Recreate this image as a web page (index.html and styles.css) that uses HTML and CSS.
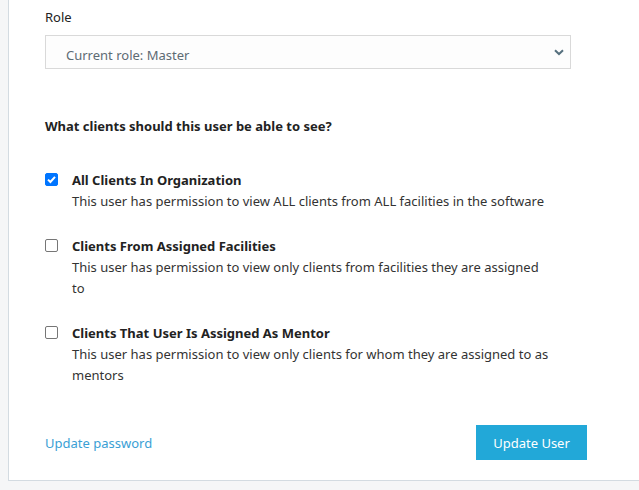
FILE: index.html
```html
<!DOCTYPE html>
<html>
<head>
<meta charset="utf-8">
<link rel="stylesheet" href="styles.css">
</head>
<body>
<div class="card">
  <div class="field">
    <label class="label">Role</label>
    <div class="select">
      <span class="value">Current role: Master</span>
      <svg class="chev" width="10" height="7" viewBox="0 0 10 7"><path d="M1 1.2 L5 5 L9 1.2" fill="none" stroke="#56707e" stroke-width="2"/></svg>
    </div>
  </div>
  <h3 class="question">What clients should this user be able to see?</h3>
  <div class="options">
    <div class="option">
      <span class="box checked"><svg width="13" height="13" viewBox="0 0 13 13"><path d="M3 6.6 L5.4 9 L10 3.8" fill="none" stroke="#fff" stroke-width="2"/></svg></span>
      <div class="text">
        <div class="title">All Clients In Organization</div>
        <div class="desc">This user has permission to view ALL clients from ALL facilities in the software</div>
      </div>
    </div>
    <div class="option">
      <span class="box"></span>
      <div class="text">
        <div class="title">Clients From Assigned Facilities</div>
        <div class="desc">This user has permission to view only clients from facilities they are assigned to</div>
      </div>
    </div>
    <div class="option">
      <span class="box"></span>
      <div class="text">
        <div class="title">Clients That User Is Assigned As Mentor</div>
        <div class="desc">This user has permission to view only clients for whom they are assigned to as mentors</div>
      </div>
    </div>
  </div>
  <div class="footer">
    <a class="link" href="#">Update password</a>
    <button class="btn">Update User</button>
  </div>
</div>
</body>
</html>
```
FILE: styles.css
```css
* { box-sizing: border-box; }
html, body { margin: 0; padding: 0; }
body {
  background: #f5f6f7;
  font-family: "Noto Sans", "Open Sans", sans-serif;
  font-size: 13px;
  color: #333;
  width: 639px;
  height: 490px;
  overflow: hidden;
}
.card {
  margin-left: 8px;
  width: 660px;
  height: 481px;
  background: #fff;
  border-left: 1px solid #d3dbe1;
  border-bottom: 1px solid #d3dbe1;
  padding: 6px 0 0 36px;
}
.label {
  display: block;
  color: #222;
  line-height: 22px;
  height: 29px;
}
.select {
  width: 526px;
  height: 34px;
  border: 1px solid #d9d9d9;
  background: #fdfdfd;
  display: flex;
  align-items: center;
  justify-content: space-between;
  padding: 0 6px 0 20px;
  color: #5d6b74;
}
.value { padding-top: 6px; }
.chev { margin-top: 1px; }
.question {
  margin: 48px 0 0;
  font-size: 13px;
  font-weight: bold;
  color: #222;
  line-height: 18px;
}
.options {
  margin-top: 35px;
  display: flex;
  flex-direction: column;
  gap: 24px;
}
.option { display: flex; }
.box {
  width: 13px;
  height: 13px;
  border: 1px solid #767676;
  border-radius: 2px;
  margin: 3px 14px 0 0;
  flex: none;
  display: flex;
}
.box.checked { background: #0075ff; border-color: #0075ff; }
.box.checked svg { margin: -1px; }
.text { width: 482px; }
.title { font-weight: bold; color: #222; line-height: 21px; }
.desc { line-height: 21px; }
.footer {
  margin-top: 39px;
  width: 542px;
  display: flex;
  justify-content: space-between;
  align-items: center;
}
.link { color: #3aa0d5; text-decoration: none; }
.btn {
  width: 111px;
  height: 35px;
  border: 0;
  background: #22a8d8;
  color: #fff;
  font-family: inherit;
  font-size: 13px;
  padding: 0;
}
```
